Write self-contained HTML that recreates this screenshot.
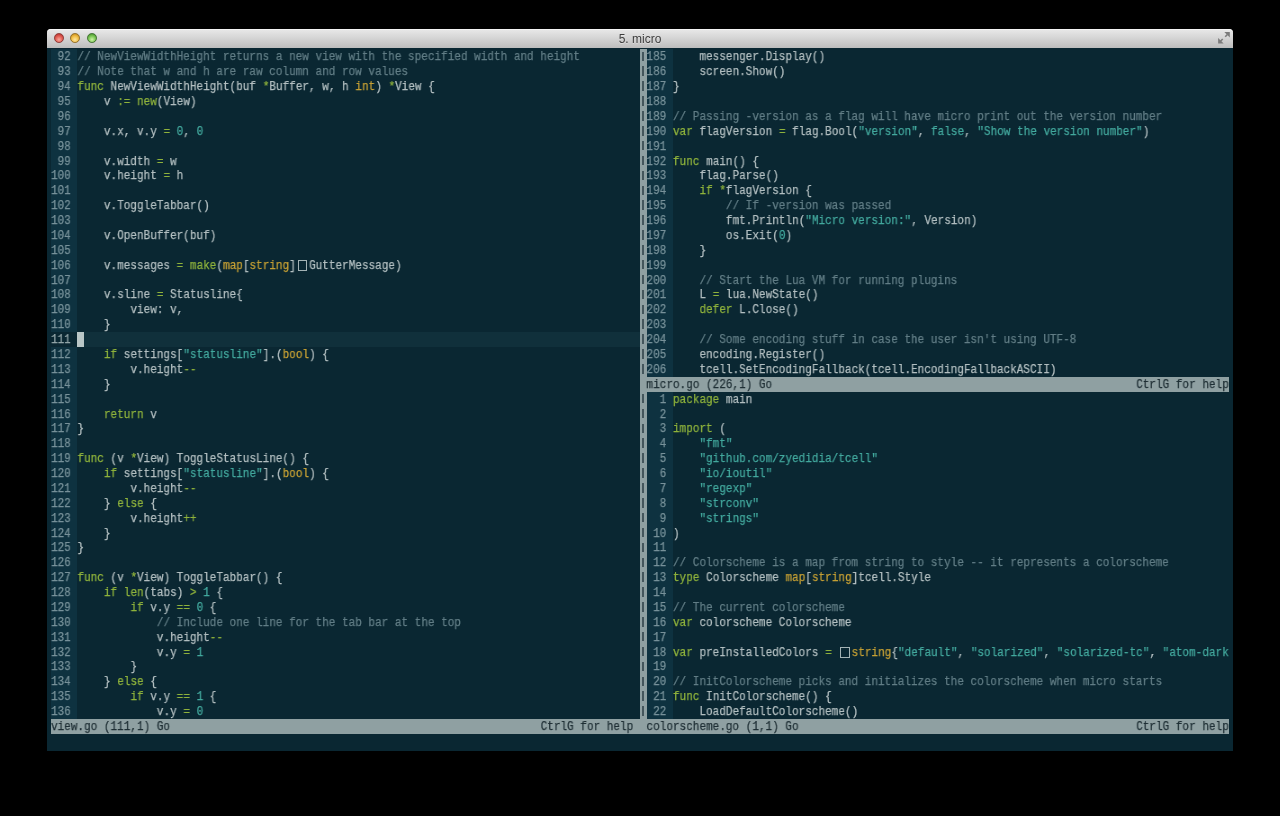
<!DOCTYPE html>
<html><head><meta charset="utf-8"><style>
html,body{margin:0;padding:0;background:#000000;width:1280px;height:816px;overflow:hidden;position:relative}
.tx{position:absolute;left:0;top:0.8px;width:1422px;height:816px;transform:scaleX(0.9);transform-origin:0 0;will-change:transform}
.r{position:absolute;white-space:pre;font-family:"Liberation Mono",monospace;font-size:12.2px;letter-spacing:0.0322px;line-height:14.88px;color:#b3bfc1;-webkit-text-stroke:0.25px currentColor}
.c{color:#627e86}
.k{color:#8fb33c}
.t{color:#c6a034}
.s{color:#43a99e}
.ln{color:#78929a}
.curln{color:#93a5a8}
.st{color:#1f2f35}
.box{position:absolute;box-sizing:border-box;border:1.4px solid #a4b3b5;width:9.4px;height:11px}
.cursor{position:absolute;background:#b9c6c6}
.bar{position:absolute;width:1.35px;height:9.5px;background:#44565c}
.win{position:absolute;left:47px;top:29px;width:1186px;height:19.00px;border-radius:4px 4px 0 0;background:linear-gradient(#e9e9e9,#d6d6d6 45%,#bdbdbd);box-shadow:inset 0 1px 0 #f4f4f4}
.title{position:absolute;left:0;width:100%;top:0;height:19.00px;line-height:20.00px;text-align:center;font-family:"Liberation Sans",sans-serif;font-size:12px;color:#3c3c3c;text-shadow:0 1px 0 rgba(255,255,255,0.35);will-change:transform}
.tl{position:absolute;top:3.90px;width:9.8px;height:9.8px;border-radius:50%;box-sizing:border-box}
</style></head><body>
<div class="win"><div class="title">5. micro</div>
<div class="tl" style="left:7.00px;background:radial-gradient(circle at 50% 70%,#f7a89c,#e5645a 45%,#c8403a 75%,#8e2f2b);border:0.8px solid #8a3430"></div>
<div class="tl" style="left:23.20px;background:radial-gradient(circle at 50% 70%,#fde6a0,#f2c24e 45%,#d89e2a 75%,#946a1c);border:0.8px solid #8f6a22"></div>
<div class="tl" style="left:39.90px;background:radial-gradient(circle at 50% 70%,#cdf2a8,#84cc5c 45%,#5aa63a 75%,#35702a);border:0.8px solid #3b6e2c"></div>
<svg style="position:absolute;left:1169px;top:1px" width="16" height="16" viewBox="1216 30 16 16">
<path d="M1224.3 32.1 L1229.8 32.1 L1229.8 37.6 Z" fill="#7b7b7b"/>
<path d="M1227.4 34.5 L1225.2 36.7" stroke="#7b7b7b" stroke-width="1.6"/>
<path d="M1218.1 38.1 L1218.1 43.6 L1223.6 43.6 Z" fill="#7b7b7b"/>
<path d="M1220.5 41.2 L1222.7 39.0" stroke="#7b7b7b" stroke-width="1.6"/>
</svg>
</div>
<div style="position:absolute;left:47.00px;top:48.00px;width:1186.00px;height:702.50px;background:#0a2732;"></div><div style="position:absolute;left:51.00px;top:49.40px;width:26.47px;height:14.88px;background:#0e3240;"></div><div style="position:absolute;left:51.00px;top:64.28px;width:26.47px;height:14.88px;background:#0e3240;"></div><div style="position:absolute;left:51.00px;top:79.16px;width:26.47px;height:14.88px;background:#0e3240;"></div><div style="position:absolute;left:51.00px;top:94.04px;width:26.47px;height:14.88px;background:#0e3240;"></div><div style="position:absolute;left:51.00px;top:108.92px;width:26.47px;height:14.88px;background:#0e3240;"></div><div style="position:absolute;left:51.00px;top:123.80px;width:26.47px;height:14.88px;background:#0e3240;"></div><div style="position:absolute;left:51.00px;top:138.68px;width:26.47px;height:14.88px;background:#0e3240;"></div><div style="position:absolute;left:51.00px;top:153.56px;width:26.47px;height:14.88px;background:#0e3240;"></div><div style="position:absolute;left:51.00px;top:168.44px;width:26.47px;height:14.88px;background:#0e3240;"></div><div style="position:absolute;left:51.00px;top:183.32px;width:26.47px;height:14.88px;background:#0e3240;"></div><div style="position:absolute;left:51.00px;top:198.20px;width:26.47px;height:14.88px;background:#0e3240;"></div><div style="position:absolute;left:51.00px;top:213.08px;width:26.47px;height:14.88px;background:#0e3240;"></div><div style="position:absolute;left:51.00px;top:227.96px;width:26.47px;height:14.88px;background:#0e3240;"></div><div style="position:absolute;left:51.00px;top:242.84px;width:26.47px;height:14.88px;background:#0e3240;"></div><div style="position:absolute;left:51.00px;top:257.72px;width:26.47px;height:14.88px;background:#0e3240;"></div><div class="box" style="left:297.83px;top:259.72px"></div><div style="position:absolute;left:51.00px;top:272.60px;width:26.47px;height:14.88px;background:#0e3240;"></div><div style="position:absolute;left:51.00px;top:287.48px;width:26.47px;height:14.88px;background:#0e3240;"></div><div style="position:absolute;left:51.00px;top:302.36px;width:26.47px;height:14.88px;background:#0e3240;"></div><div style="position:absolute;left:51.00px;top:317.24px;width:26.47px;height:14.88px;background:#0e3240;"></div><div style="position:absolute;left:77.47px;top:332.12px;width:562.45px;height:14.88px;background:#10303b;"></div><div class="cursor" style="left:77.47px;top:332.12px;width:6.62px;height:14.88px"></div><div style="position:absolute;left:51.00px;top:347.00px;width:26.47px;height:14.88px;background:#0e3240;"></div><div style="position:absolute;left:51.00px;top:361.88px;width:26.47px;height:14.88px;background:#0e3240;"></div><div style="position:absolute;left:51.00px;top:376.76px;width:26.47px;height:14.88px;background:#0e3240;"></div><div style="position:absolute;left:51.00px;top:391.64px;width:26.47px;height:14.88px;background:#0e3240;"></div><div style="position:absolute;left:51.00px;top:406.52px;width:26.47px;height:14.88px;background:#0e3240;"></div><div style="position:absolute;left:51.00px;top:421.40px;width:26.47px;height:14.88px;background:#0e3240;"></div><div style="position:absolute;left:51.00px;top:436.28px;width:26.47px;height:14.88px;background:#0e3240;"></div><div style="position:absolute;left:51.00px;top:451.16px;width:26.47px;height:14.88px;background:#0e3240;"></div><div style="position:absolute;left:51.00px;top:466.04px;width:26.47px;height:14.88px;background:#0e3240;"></div><div style="position:absolute;left:51.00px;top:480.92px;width:26.47px;height:14.88px;background:#0e3240;"></div><div style="position:absolute;left:51.00px;top:495.80px;width:26.47px;height:14.88px;background:#0e3240;"></div><div style="position:absolute;left:51.00px;top:510.68px;width:26.47px;height:14.88px;background:#0e3240;"></div><div style="position:absolute;left:51.00px;top:525.56px;width:26.47px;height:14.88px;background:#0e3240;"></div><div style="position:absolute;left:51.00px;top:540.44px;width:26.47px;height:14.88px;background:#0e3240;"></div><div style="position:absolute;left:51.00px;top:555.32px;width:26.47px;height:14.88px;background:#0e3240;"></div><div style="position:absolute;left:51.00px;top:570.20px;width:26.47px;height:14.88px;background:#0e3240;"></div><div style="position:absolute;left:51.00px;top:585.08px;width:26.47px;height:14.88px;background:#0e3240;"></div><div style="position:absolute;left:51.00px;top:599.96px;width:26.47px;height:14.88px;background:#0e3240;"></div><div style="position:absolute;left:51.00px;top:614.84px;width:26.47px;height:14.88px;background:#0e3240;"></div><div style="position:absolute;left:51.00px;top:629.72px;width:26.47px;height:14.88px;background:#0e3240;"></div><div style="position:absolute;left:51.00px;top:644.60px;width:26.47px;height:14.88px;background:#0e3240;"></div><div style="position:absolute;left:51.00px;top:659.48px;width:26.47px;height:14.88px;background:#0e3240;"></div><div style="position:absolute;left:51.00px;top:674.36px;width:26.47px;height:14.88px;background:#0e3240;"></div><div style="position:absolute;left:51.00px;top:689.24px;width:26.47px;height:14.88px;background:#0e3240;"></div><div style="position:absolute;left:51.00px;top:704.12px;width:26.47px;height:14.88px;background:#0e3240;"></div><div style="position:absolute;left:639.91px;top:49.40px;width:6.62px;height:669.60px;background:#8fa0a2;"></div><div class="bar" style="left:642.21px;top:51.60px"></div><div class="bar" style="left:642.21px;top:66.48px"></div><div class="bar" style="left:642.21px;top:81.36px"></div><div class="bar" style="left:642.21px;top:96.24px"></div><div class="bar" style="left:642.21px;top:111.12px"></div><div class="bar" style="left:642.21px;top:126.00px"></div><div class="bar" style="left:642.21px;top:140.88px"></div><div class="bar" style="left:642.21px;top:155.76px"></div><div class="bar" style="left:642.21px;top:170.64px"></div><div class="bar" style="left:642.21px;top:185.52px"></div><div class="bar" style="left:642.21px;top:200.40px"></div><div class="bar" style="left:642.21px;top:215.28px"></div><div class="bar" style="left:642.21px;top:230.16px"></div><div class="bar" style="left:642.21px;top:245.04px"></div><div class="bar" style="left:642.21px;top:259.92px"></div><div class="bar" style="left:642.21px;top:274.80px"></div><div class="bar" style="left:642.21px;top:289.68px"></div><div class="bar" style="left:642.21px;top:304.56px"></div><div class="bar" style="left:642.21px;top:319.44px"></div><div class="bar" style="left:642.21px;top:334.32px"></div><div class="bar" style="left:642.21px;top:349.20px"></div><div class="bar" style="left:642.21px;top:364.08px"></div><div class="bar" style="left:642.21px;top:393.84px"></div><div class="bar" style="left:642.21px;top:408.72px"></div><div class="bar" style="left:642.21px;top:423.60px"></div><div class="bar" style="left:642.21px;top:438.48px"></div><div class="bar" style="left:642.21px;top:453.36px"></div><div class="bar" style="left:642.21px;top:468.24px"></div><div class="bar" style="left:642.21px;top:483.12px"></div><div class="bar" style="left:642.21px;top:498.00px"></div><div class="bar" style="left:642.21px;top:512.88px"></div><div class="bar" style="left:642.21px;top:527.76px"></div><div class="bar" style="left:642.21px;top:542.64px"></div><div class="bar" style="left:642.21px;top:557.52px"></div><div class="bar" style="left:642.21px;top:572.40px"></div><div class="bar" style="left:642.21px;top:587.28px"></div><div class="bar" style="left:642.21px;top:602.16px"></div><div class="bar" style="left:642.21px;top:617.04px"></div><div class="bar" style="left:642.21px;top:631.92px"></div><div class="bar" style="left:642.21px;top:646.80px"></div><div class="bar" style="left:642.21px;top:661.68px"></div><div class="bar" style="left:642.21px;top:676.56px"></div><div class="bar" style="left:642.21px;top:691.44px"></div><div class="bar" style="left:642.21px;top:706.32px"></div><div style="position:absolute;left:646.53px;top:49.40px;width:26.47px;height:14.88px;background:#0e3240;"></div><div style="position:absolute;left:646.53px;top:64.28px;width:26.47px;height:14.88px;background:#0e3240;"></div><div style="position:absolute;left:646.53px;top:79.16px;width:26.47px;height:14.88px;background:#0e3240;"></div><div style="position:absolute;left:646.53px;top:94.04px;width:26.47px;height:14.88px;background:#0e3240;"></div><div style="position:absolute;left:646.53px;top:108.92px;width:26.47px;height:14.88px;background:#0e3240;"></div><div style="position:absolute;left:646.53px;top:123.80px;width:26.47px;height:14.88px;background:#0e3240;"></div><div style="position:absolute;left:646.53px;top:138.68px;width:26.47px;height:14.88px;background:#0e3240;"></div><div style="position:absolute;left:646.53px;top:153.56px;width:26.47px;height:14.88px;background:#0e3240;"></div><div style="position:absolute;left:646.53px;top:168.44px;width:26.47px;height:14.88px;background:#0e3240;"></div><div style="position:absolute;left:646.53px;top:183.32px;width:26.47px;height:14.88px;background:#0e3240;"></div><div style="position:absolute;left:646.53px;top:198.20px;width:26.47px;height:14.88px;background:#0e3240;"></div><div style="position:absolute;left:646.53px;top:213.08px;width:26.47px;height:14.88px;background:#0e3240;"></div><div style="position:absolute;left:646.53px;top:227.96px;width:26.47px;height:14.88px;background:#0e3240;"></div><div style="position:absolute;left:646.53px;top:242.84px;width:26.47px;height:14.88px;background:#0e3240;"></div><div style="position:absolute;left:646.53px;top:257.72px;width:26.47px;height:14.88px;background:#0e3240;"></div><div style="position:absolute;left:646.53px;top:272.60px;width:26.47px;height:14.88px;background:#0e3240;"></div><div style="position:absolute;left:646.53px;top:287.48px;width:26.47px;height:14.88px;background:#0e3240;"></div><div style="position:absolute;left:646.53px;top:302.36px;width:26.47px;height:14.88px;background:#0e3240;"></div><div style="position:absolute;left:646.53px;top:317.24px;width:26.47px;height:14.88px;background:#0e3240;"></div><div style="position:absolute;left:646.53px;top:332.12px;width:26.47px;height:14.88px;background:#0e3240;"></div><div style="position:absolute;left:646.53px;top:347.00px;width:26.47px;height:14.88px;background:#0e3240;"></div><div style="position:absolute;left:646.53px;top:361.88px;width:26.47px;height:14.88px;background:#0e3240;"></div><div style="position:absolute;left:646.53px;top:376.76px;width:582.30px;height:14.88px;background:#8fa0a2;"></div><div style="position:absolute;left:646.53px;top:391.64px;width:26.47px;height:14.88px;background:#0e3240;"></div><div style="position:absolute;left:646.53px;top:406.52px;width:26.47px;height:14.88px;background:#0e3240;"></div><div style="position:absolute;left:646.53px;top:421.40px;width:26.47px;height:14.88px;background:#0e3240;"></div><div style="position:absolute;left:646.53px;top:436.28px;width:26.47px;height:14.88px;background:#0e3240;"></div><div style="position:absolute;left:646.53px;top:451.16px;width:26.47px;height:14.88px;background:#0e3240;"></div><div style="position:absolute;left:646.53px;top:466.04px;width:26.47px;height:14.88px;background:#0e3240;"></div><div style="position:absolute;left:646.53px;top:480.92px;width:26.47px;height:14.88px;background:#0e3240;"></div><div style="position:absolute;left:646.53px;top:495.80px;width:26.47px;height:14.88px;background:#0e3240;"></div><div style="position:absolute;left:646.53px;top:510.68px;width:26.47px;height:14.88px;background:#0e3240;"></div><div style="position:absolute;left:646.53px;top:525.56px;width:26.47px;height:14.88px;background:#0e3240;"></div><div style="position:absolute;left:646.53px;top:540.44px;width:26.47px;height:14.88px;background:#0e3240;"></div><div style="position:absolute;left:646.53px;top:555.32px;width:26.47px;height:14.88px;background:#0e3240;"></div><div style="position:absolute;left:646.53px;top:570.20px;width:26.47px;height:14.88px;background:#0e3240;"></div><div style="position:absolute;left:646.53px;top:585.08px;width:26.47px;height:14.88px;background:#0e3240;"></div><div style="position:absolute;left:646.53px;top:599.96px;width:26.47px;height:14.88px;background:#0e3240;"></div><div style="position:absolute;left:646.53px;top:614.84px;width:26.47px;height:14.88px;background:#0e3240;"></div><div style="position:absolute;left:646.53px;top:629.72px;width:26.47px;height:14.88px;background:#0e3240;"></div><div style="position:absolute;left:646.53px;top:644.60px;width:26.47px;height:14.88px;background:#0e3240;"></div><div class="box" style="left:840.42px;top:646.60px"></div><div style="position:absolute;left:646.53px;top:659.48px;width:26.47px;height:14.88px;background:#0e3240;"></div><div style="position:absolute;left:646.53px;top:674.36px;width:26.47px;height:14.88px;background:#0e3240;"></div><div style="position:absolute;left:646.53px;top:689.24px;width:26.47px;height:14.88px;background:#0e3240;"></div><div style="position:absolute;left:646.53px;top:704.12px;width:26.47px;height:14.88px;background:#0e3240;"></div><div style="position:absolute;left:51.00px;top:719.00px;width:1177.83px;height:14.88px;background:#8fa0a2;"></div>
<div class="tx"><span class="r ln" style="left:56.67px;top:49.40px"> 92</span><span class="r c" style="left:86.08px;top:49.40px">// NewViewWidthHeight returns a new view with the specified width and height</span><span class="r ln" style="left:56.67px;top:64.28px"> 93</span><span class="r c" style="left:86.08px;top:64.28px">// Note that w and h are raw column and row values</span><span class="r ln" style="left:56.67px;top:79.16px"> 94</span><span class="r k" style="left:86.08px;top:79.16px">func</span><span class="r" style="left:122.84px;top:79.16px">NewViewWidthHeight(buf </span><span class="r k" style="left:291.94px;top:79.16px">*</span><span class="r" style="left:299.29px;top:79.16px">Buffer, w, h </span><span class="r t" style="left:394.87px;top:79.16px">int</span><span class="r" style="left:416.93px;top:79.16px">) </span><span class="r k" style="left:431.63px;top:79.16px">*</span><span class="r" style="left:438.98px;top:79.16px">View {</span><span class="r ln" style="left:56.67px;top:94.04px"> 95</span><span class="r" style="left:115.48px;top:94.04px">v </span><span class="r k" style="left:130.19px;top:94.04px">:=</span><span class="r k" style="left:152.25px;top:94.04px">new</span><span class="r" style="left:174.30px;top:94.04px">(View)</span><span class="r ln" style="left:56.67px;top:108.92px"> 96</span><span class="r ln" style="left:56.67px;top:123.80px"> 97</span><span class="r" style="left:115.48px;top:123.80px">v.x, v.y </span><span class="r k" style="left:181.65px;top:123.80px">=</span><span class="r s" style="left:196.36px;top:123.80px">0</span><span class="r" style="left:203.71px;top:123.80px">, </span><span class="r s" style="left:218.42px;top:123.80px">0</span><span class="r ln" style="left:56.67px;top:138.68px"> 98</span><span class="r ln" style="left:56.67px;top:153.56px"> 99</span><span class="r" style="left:115.48px;top:153.56px">v.width </span><span class="r k" style="left:174.30px;top:153.56px">=</span><span class="r" style="left:189.01px;top:153.56px">w</span><span class="r ln" style="left:56.67px;top:168.44px">100</span><span class="r" style="left:115.48px;top:168.44px">v.height </span><span class="r k" style="left:181.65px;top:168.44px">=</span><span class="r" style="left:196.36px;top:168.44px">h</span><span class="r ln" style="left:56.67px;top:183.32px">101</span><span class="r ln" style="left:56.67px;top:198.20px">102</span><span class="r" style="left:115.48px;top:198.20px">v.ToggleTabbar()</span><span class="r ln" style="left:56.67px;top:213.08px">103</span><span class="r ln" style="left:56.67px;top:227.96px">104</span><span class="r" style="left:115.48px;top:227.96px">v.OpenBuffer(buf)</span><span class="r ln" style="left:56.67px;top:242.84px">105</span><span class="r ln" style="left:56.67px;top:257.72px">106</span><span class="r" style="left:115.48px;top:257.72px">v.messages </span><span class="r k" style="left:196.36px;top:257.72px">=</span><span class="r k" style="left:211.06px;top:257.72px">make</span><span class="r" style="left:240.47px;top:257.72px">(</span><span class="r t" style="left:247.82px;top:257.72px">map</span><span class="r" style="left:269.88px;top:257.72px">[</span><span class="r t" style="left:277.23px;top:257.72px">string</span><span class="r" style="left:321.35px;top:257.72px">]</span><span class="r" style="left:343.40px;top:257.72px">GutterMessage)</span><span class="r ln" style="left:56.67px;top:272.60px">107</span><span class="r ln" style="left:56.67px;top:287.48px">108</span><span class="r" style="left:115.48px;top:287.48px">v.sline </span><span class="r k" style="left:174.30px;top:287.48px">=</span><span class="r" style="left:189.01px;top:287.48px">Statusline{</span><span class="r ln" style="left:56.67px;top:302.36px">109</span><span class="r" style="left:144.89px;top:302.36px">view: v,</span><span class="r ln" style="left:56.67px;top:317.24px">110</span><span class="r" style="left:115.48px;top:317.24px">}</span><span class="r curln" style="left:56.67px;top:332.12px">111</span><span class="r ln" style="left:56.67px;top:347.00px">112</span><span class="r k" style="left:115.48px;top:347.00px">if</span><span class="r" style="left:137.54px;top:347.00px">settings[</span><span class="r s" style="left:203.71px;top:347.00px">&quot;statusline&quot;</span><span class="r" style="left:291.94px;top:347.00px">].(</span><span class="r t" style="left:313.99px;top:347.00px">bool</span><span class="r" style="left:343.40px;top:347.00px">) {</span><span class="r ln" style="left:56.67px;top:361.88px">113</span><span class="r" style="left:144.89px;top:361.88px">v.height</span><span class="r k" style="left:203.71px;top:361.88px">--</span><span class="r ln" style="left:56.67px;top:376.76px">114</span><span class="r" style="left:115.48px;top:376.76px">}</span><span class="r ln" style="left:56.67px;top:391.64px">115</span><span class="r ln" style="left:56.67px;top:406.52px">116</span><span class="r k" style="left:115.48px;top:406.52px">return</span><span class="r" style="left:166.95px;top:406.52px">v</span><span class="r ln" style="left:56.67px;top:421.40px">117</span><span class="r" style="left:86.08px;top:421.40px">}</span><span class="r ln" style="left:56.67px;top:436.28px">118</span><span class="r ln" style="left:56.67px;top:451.16px">119</span><span class="r k" style="left:86.08px;top:451.16px">func</span><span class="r" style="left:122.84px;top:451.16px">(v </span><span class="r k" style="left:144.89px;top:451.16px">*</span><span class="r" style="left:152.25px;top:451.16px">View) ToggleStatusLine() {</span><span class="r ln" style="left:56.67px;top:466.04px">120</span><span class="r k" style="left:115.48px;top:466.04px">if</span><span class="r" style="left:137.54px;top:466.04px">settings[</span><span class="r s" style="left:203.71px;top:466.04px">&quot;statusline&quot;</span><span class="r" style="left:291.94px;top:466.04px">].(</span><span class="r t" style="left:313.99px;top:466.04px">bool</span><span class="r" style="left:343.40px;top:466.04px">) {</span><span class="r ln" style="left:56.67px;top:480.92px">121</span><span class="r" style="left:144.89px;top:480.92px">v.height</span><span class="r k" style="left:203.71px;top:480.92px">--</span><span class="r ln" style="left:56.67px;top:495.80px">122</span><span class="r" style="left:115.48px;top:495.80px">} </span><span class="r k" style="left:130.19px;top:495.80px">else</span><span class="r" style="left:166.95px;top:495.80px">{</span><span class="r ln" style="left:56.67px;top:510.68px">123</span><span class="r" style="left:144.89px;top:510.68px">v.height</span><span class="r k" style="left:203.71px;top:510.68px">++</span><span class="r ln" style="left:56.67px;top:525.56px">124</span><span class="r" style="left:115.48px;top:525.56px">}</span><span class="r ln" style="left:56.67px;top:540.44px">125</span><span class="r" style="left:86.08px;top:540.44px">}</span><span class="r ln" style="left:56.67px;top:555.32px">126</span><span class="r ln" style="left:56.67px;top:570.20px">127</span><span class="r k" style="left:86.08px;top:570.20px">func</span><span class="r" style="left:122.84px;top:570.20px">(v </span><span class="r k" style="left:144.89px;top:570.20px">*</span><span class="r" style="left:152.25px;top:570.20px">View) ToggleTabbar() {</span><span class="r ln" style="left:56.67px;top:585.08px">128</span><span class="r k" style="left:115.48px;top:585.08px">if</span><span class="r k" style="left:137.54px;top:585.08px">len</span><span class="r" style="left:159.60px;top:585.08px">(tabs) </span><span class="r k" style="left:211.06px;top:585.08px">&gt;</span><span class="r s" style="left:225.77px;top:585.08px">1</span><span class="r" style="left:240.47px;top:585.08px">{</span><span class="r ln" style="left:56.67px;top:599.96px">129</span><span class="r k" style="left:144.89px;top:599.96px">if</span><span class="r" style="left:166.95px;top:599.96px">v.y </span><span class="r k" style="left:196.36px;top:599.96px">==</span><span class="r s" style="left:218.42px;top:599.96px">0</span><span class="r" style="left:233.12px;top:599.96px">{</span><span class="r ln" style="left:56.67px;top:614.84px">130</span><span class="r c" style="left:174.30px;top:614.84px">// Include one line for the tab bar at the top</span><span class="r ln" style="left:56.67px;top:629.72px">131</span><span class="r" style="left:174.30px;top:629.72px">v.height</span><span class="r k" style="left:233.12px;top:629.72px">--</span><span class="r ln" style="left:56.67px;top:644.60px">132</span><span class="r" style="left:174.30px;top:644.60px">v.y </span><span class="r k" style="left:203.71px;top:644.60px">=</span><span class="r s" style="left:218.42px;top:644.60px">1</span><span class="r ln" style="left:56.67px;top:659.48px">133</span><span class="r" style="left:144.89px;top:659.48px">}</span><span class="r ln" style="left:56.67px;top:674.36px">134</span><span class="r" style="left:115.48px;top:674.36px">} </span><span class="r k" style="left:130.19px;top:674.36px">else</span><span class="r" style="left:166.95px;top:674.36px">{</span><span class="r ln" style="left:56.67px;top:689.24px">135</span><span class="r k" style="left:144.89px;top:689.24px">if</span><span class="r" style="left:166.95px;top:689.24px">v.y </span><span class="r k" style="left:196.36px;top:689.24px">==</span><span class="r s" style="left:218.42px;top:689.24px">1</span><span class="r" style="left:233.12px;top:689.24px">{</span><span class="r ln" style="left:56.67px;top:704.12px">136</span><span class="r" style="left:174.30px;top:704.12px">v.y </span><span class="r k" style="left:203.71px;top:704.12px">=</span><span class="r s" style="left:218.42px;top:704.12px">0</span><span class="r ln" style="left:718.37px;top:49.40px">185</span><span class="r" style="left:777.18px;top:49.40px">messenger.Display()</span><span class="r ln" style="left:718.37px;top:64.28px">186</span><span class="r" style="left:777.18px;top:64.28px">screen.Show()</span><span class="r ln" style="left:718.37px;top:79.16px">187</span><span class="r" style="left:747.78px;top:79.16px">}</span><span class="r ln" style="left:718.37px;top:94.04px">188</span><span class="r ln" style="left:718.37px;top:108.92px">189</span><span class="r c" style="left:747.78px;top:108.92px">// Passing -version as a flag will have micro print out the version number</span><span class="r ln" style="left:718.37px;top:123.80px">190</span><span class="r k" style="left:747.78px;top:123.80px">var</span><span class="r" style="left:777.18px;top:123.80px">flagVersion </span><span class="r k" style="left:865.41px;top:123.80px">=</span><span class="r" style="left:880.12px;top:123.80px">flag.Bool(</span><span class="r s" style="left:953.64px;top:123.80px">&quot;version&quot;</span><span class="r" style="left:1019.81px;top:123.80px">, </span><span class="r s" style="left:1034.51px;top:123.80px">false</span><span class="r" style="left:1071.27px;top:123.80px">, </span><span class="r s" style="left:1085.98px;top:123.80px">&quot;Show the version number&quot;</span><span class="r" style="left:1269.78px;top:123.80px">)</span><span class="r ln" style="left:718.37px;top:138.68px">191</span><span class="r ln" style="left:718.37px;top:153.56px">192</span><span class="r k" style="left:747.78px;top:153.56px">func</span><span class="r" style="left:784.54px;top:153.56px">main() {</span><span class="r ln" style="left:718.37px;top:168.44px">193</span><span class="r" style="left:777.18px;top:168.44px">flag.Parse()</span><span class="r ln" style="left:718.37px;top:183.32px">194</span><span class="r k" style="left:777.18px;top:183.32px">if</span><span class="r k" style="left:799.24px;top:183.32px">*</span><span class="r" style="left:806.59px;top:183.32px">flagVersion {</span><span class="r ln" style="left:718.37px;top:198.20px">195</span><span class="r c" style="left:806.59px;top:198.20px">// If -version was passed</span><span class="r ln" style="left:718.37px;top:213.08px">196</span><span class="r" style="left:806.59px;top:213.08px">fmt.Println(</span><span class="r s" style="left:894.82px;top:213.08px">&quot;Micro version:&quot;</span><span class="r" style="left:1012.46px;top:213.08px">, Version)</span><span class="r ln" style="left:718.37px;top:227.96px">197</span><span class="r" style="left:806.59px;top:227.96px">os.Exit(</span><span class="r s" style="left:865.41px;top:227.96px">0</span><span class="r" style="left:872.76px;top:227.96px">)</span><span class="r ln" style="left:718.37px;top:242.84px">198</span><span class="r" style="left:777.18px;top:242.84px">}</span><span class="r ln" style="left:718.37px;top:257.72px">199</span><span class="r ln" style="left:718.37px;top:272.60px">200</span><span class="r c" style="left:777.18px;top:272.60px">// Start the Lua VM for running plugins</span><span class="r ln" style="left:718.37px;top:287.48px">201</span><span class="r" style="left:777.18px;top:287.48px">L </span><span class="r k" style="left:791.89px;top:287.48px">=</span><span class="r" style="left:806.59px;top:287.48px">lua.NewState()</span><span class="r ln" style="left:718.37px;top:302.36px">202</span><span class="r k" style="left:777.18px;top:302.36px">defer</span><span class="r" style="left:821.30px;top:302.36px">L.Close()</span><span class="r ln" style="left:718.37px;top:317.24px">203</span><span class="r ln" style="left:718.37px;top:332.12px">204</span><span class="r c" style="left:777.18px;top:332.12px">// Some encoding stuff in case the user isn&#x27;t using UTF-8</span><span class="r ln" style="left:718.37px;top:347.00px">205</span><span class="r" style="left:777.18px;top:347.00px">encoding.Register()</span><span class="r ln" style="left:718.37px;top:361.88px">206</span><span class="r" style="left:777.18px;top:361.88px">tcell.SetEncodingFallback(tcell.EncodingFallbackASCII)</span><span class="r st" style="left:718.37px;top:376.76px">micro.go (226,1) Go</span><span class="r st" style="left:1262.43px;top:376.76px">CtrlG for help</span><span class="r ln" style="left:718.37px;top:391.64px">  1</span><span class="r k" style="left:747.78px;top:391.64px">package</span><span class="r" style="left:806.59px;top:391.64px">main</span><span class="r ln" style="left:718.37px;top:406.52px">  2</span><span class="r ln" style="left:718.37px;top:421.40px">  3</span><span class="r k" style="left:747.78px;top:421.40px">import</span><span class="r" style="left:799.24px;top:421.40px">(</span><span class="r ln" style="left:718.37px;top:436.28px">  4</span><span class="r s" style="left:777.18px;top:436.28px">&quot;fmt&quot;</span><span class="r ln" style="left:718.37px;top:451.16px">  5</span><span class="r s" style="left:777.18px;top:451.16px">&quot;github.com/zyedidia/tcell&quot;</span><span class="r ln" style="left:718.37px;top:466.04px">  6</span><span class="r s" style="left:777.18px;top:466.04px">&quot;io/ioutil&quot;</span><span class="r ln" style="left:718.37px;top:480.92px">  7</span><span class="r s" style="left:777.18px;top:480.92px">&quot;regexp&quot;</span><span class="r ln" style="left:718.37px;top:495.80px">  8</span><span class="r s" style="left:777.18px;top:495.80px">&quot;strconv&quot;</span><span class="r ln" style="left:718.37px;top:510.68px">  9</span><span class="r s" style="left:777.18px;top:510.68px">&quot;strings&quot;</span><span class="r ln" style="left:718.37px;top:525.56px"> 10</span><span class="r" style="left:747.78px;top:525.56px">)</span><span class="r ln" style="left:718.37px;top:540.44px"> 11</span><span class="r ln" style="left:718.37px;top:555.32px"> 12</span><span class="r c" style="left:747.78px;top:555.32px">// Colorscheme is a map from string to style -- it represents a colorscheme</span><span class="r ln" style="left:718.37px;top:570.20px"> 13</span><span class="r k" style="left:747.78px;top:570.20px">type</span><span class="r" style="left:784.54px;top:570.20px">Colorscheme </span><span class="r t" style="left:872.76px;top:570.20px">map</span><span class="r" style="left:894.82px;top:570.20px">[</span><span class="r t" style="left:902.17px;top:570.20px">string</span><span class="r" style="left:946.29px;top:570.20px">]tcell.Style</span><span class="r ln" style="left:718.37px;top:585.08px"> 14</span><span class="r ln" style="left:718.37px;top:599.96px"> 15</span><span class="r c" style="left:747.78px;top:599.96px">// The current colorscheme</span><span class="r ln" style="left:718.37px;top:614.84px"> 16</span><span class="r k" style="left:747.78px;top:614.84px">var</span><span class="r" style="left:777.18px;top:614.84px">colorscheme Colorscheme</span><span class="r ln" style="left:718.37px;top:629.72px"> 17</span><span class="r ln" style="left:718.37px;top:644.60px"> 18</span><span class="r k" style="left:747.78px;top:644.60px">var</span><span class="r" style="left:777.18px;top:644.60px">preInstalledColors </span><span class="r k" style="left:916.88px;top:644.60px">=</span><span class="r t" style="left:946.29px;top:644.60px">string</span><span class="r" style="left:990.40px;top:644.60px">{</span><span class="r s" style="left:997.75px;top:644.60px">&quot;default&quot;</span><span class="r" style="left:1063.92px;top:644.60px">, </span><span class="r s" style="left:1078.63px;top:644.60px">&quot;solarized&quot;</span><span class="r" style="left:1159.50px;top:644.60px">, </span><span class="r s" style="left:1174.20px;top:644.60px">&quot;solarized-tc&quot;</span><span class="r" style="left:1277.14px;top:644.60px">, </span><span class="r s" style="left:1291.84px;top:644.60px">&quot;atom-dark</span><span class="r ln" style="left:718.37px;top:659.48px"> 19</span><span class="r ln" style="left:718.37px;top:674.36px"> 20</span><span class="r c" style="left:747.78px;top:674.36px">// InitColorscheme picks and initializes the colorscheme when micro starts</span><span class="r ln" style="left:718.37px;top:689.24px"> 21</span><span class="r k" style="left:747.78px;top:689.24px">func</span><span class="r" style="left:784.54px;top:689.24px">InitColorscheme() {</span><span class="r ln" style="left:718.37px;top:704.12px"> 22</span><span class="r" style="left:777.18px;top:704.12px">LoadDefaultColorscheme()</span><span class="r st" style="left:56.67px;top:719.00px">view.go (111,1) Go</span><span class="r st" style="left:600.73px;top:719.00px">CtrlG for help</span><span class="r st" style="left:718.37px;top:719.00px">colorscheme.go (1,1) Go</span><span class="r st" style="left:1262.43px;top:719.00px">CtrlG for help</span></div>
</body></html>
